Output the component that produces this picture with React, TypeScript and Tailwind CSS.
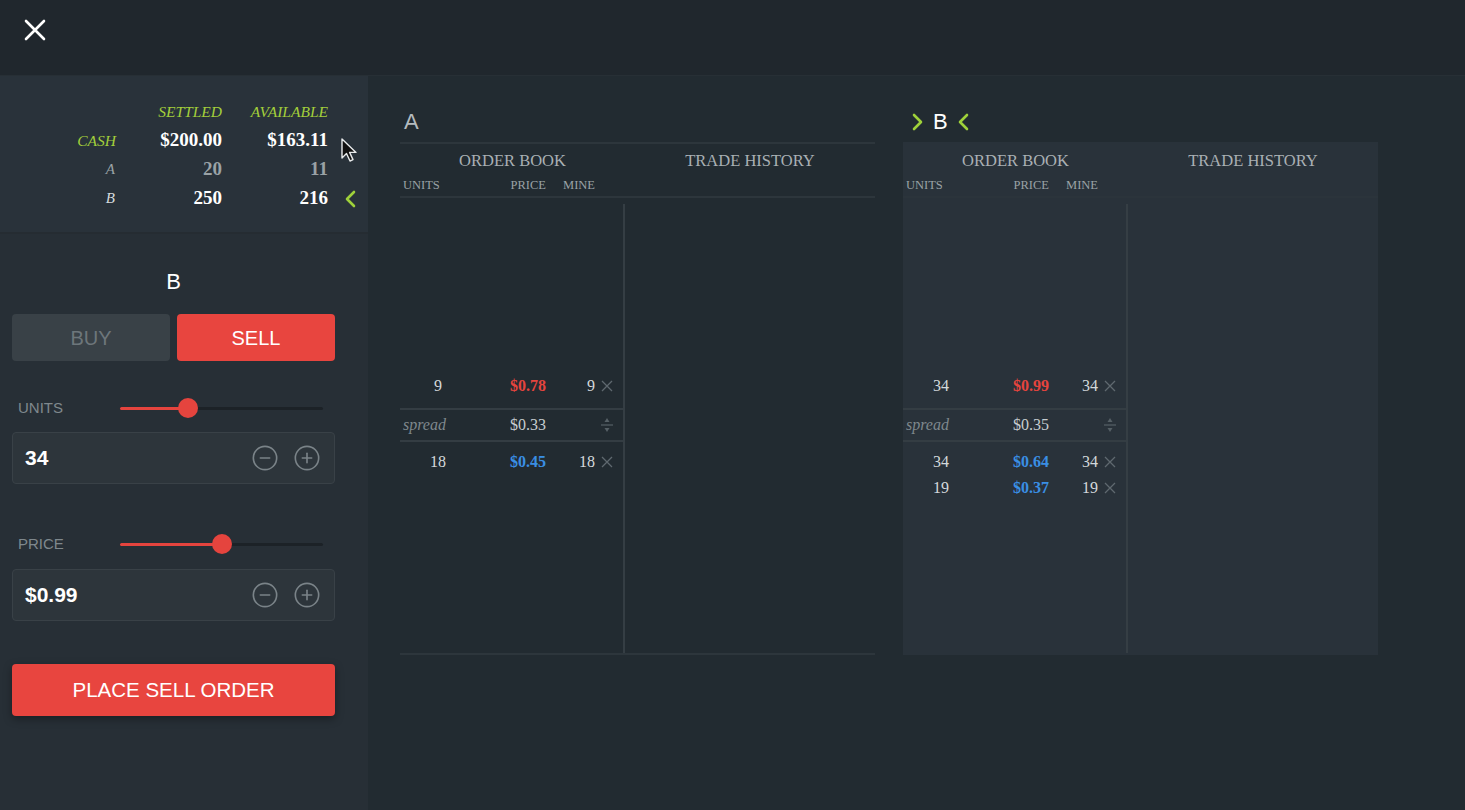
import { CircleMinus, CirclePlus } from 'lucide-react';

type Order = { units: number; price: string; mine: number };

interface Market {
  name: string;
  selected: boolean;
  asks: Order[];
  spread: string;
  bids: Order[];
}

const markets: Market[] = [
  { name: 'A', selected: false, asks: [{ units: 9, price: '$0.78', mine: 9 }], spread: '$0.33', bids: [{ units: 18, price: '$0.45', mine: 18 }] },
  {
    name: 'B',
    selected: true,
    asks: [{ units: 34, price: '$0.99', mine: 34 }],
    spread: '$0.35',
    bids: [
      { units: 34, price: '$0.64', mine: 34 },
      { units: 19, price: '$0.37', mine: 19 },
    ],
  },
];

const serif = { fontFamily: '"Liberation Serif", "Times New Roman", serif' };
const sans = { fontFamily: '"Liberation Sans", Arial, sans-serif' };

function Chevron({ dir }: { dir: 'left' | 'right' }) {
  return (
    <svg width="13" height="20" viewBox="0 0 13 20" fill="none">
      <polyline
        points={dir === 'left' ? '10,3 3,10 10,17' : '3,3 10,10 3,17'}
        stroke="#9fd13a"
        strokeWidth="2.6"
        strokeLinecap="round"
        strokeLinejoin="round"
      />
    </svg>
  );
}

function SmallX() {
  return (
    <svg width="12" height="12" viewBox="0 0 12 12">
      <path d="M1 1L11 11M11 1L1 11" stroke="#5f696f" strokeWidth="1.3" />
    </svg>
  );
}

function SpreadIcon() {
  return (
    <svg width="12" height="20" viewBox="0 0 12 20">
      <path d="M6 3L8.5 7H3.5Z" fill="#566066" />
      <path d="M0 10H12" stroke="#566066" strokeWidth="1.2" />
      <path d="M6 17L8.5 13H3.5Z" fill="#566066" />
    </svg>
  );
}

function OrderRow({ order, side }: { order: Order; side: 'ask' | 'bid' }) {
  return (
    <div className="grid grid-cols-[76px_70px_49px_24px] h-[26px] items-center text-[16px]" style={serif}>
      <span className="text-center text-[#d4d9dc]">{order.units}</span>
      <span className={`text-right font-bold ${side === 'ask' ? 'text-[#e5443e]' : 'text-[#3a8fe4]'}`}>{order.price}</span>
      <span className="text-right text-[#d4d9dc]">{order.mine}</span>
      <span className="flex justify-center">
        <SmallX />
      </span>
    </div>
  );
}

function MarketPanel({ market }: { market: Market }) {
  return (
    <div className="w-[475px] flex flex-col">
      {/* title */}
      <div className="h-[38px] flex items-center gap-[9px] pb-[3px]" style={sans}>
        {market.selected && <span className="ml-[8px]"><Chevron dir="right" /></span>}
        <span className={`text-[22px] ${market.selected ? 'text-white' : 'text-[#b4bbbf] ml-[4px]'}`}>{market.name}</span>
        {market.selected && <Chevron dir="left" />}
      </div>

      <div
        className={`h-[513px] flex flex-col border-t-2 border-b-2 ${
          market.selected ? 'bg-[#29323a] border-transparent' : 'border-[#2d363c]'
        }`}
      >
        {/* headers */}
        <div className="flex h-[30px] items-end text-[16.5px] text-[#a9b0b4]" style={serif}>
          <div className="w-[225px] text-center">ORDER BOOK</div>
          <div className="flex-1 text-center">TRADE HISTORY</div>
        </div>
        <div
          className={`grid grid-cols-[76px_70px_49px_24px] h-[24px] items-center text-[12.5px] text-[#9aa2a6] border-b-2 ${
            market.selected ? 'border-[#2b343b]' : 'border-[#2d363c]'
          }`}
          style={serif}
        >
          <span className="pl-[3px]">UNITS</span>
          <span className="text-right">PRICE</span>
          <span className="text-right">MINE</span>
          <span />
        </div>

        {/* body */}
        <div className="flex flex-1">
          <div className="w-[225px] flex flex-col border-r-2 border-[#353e44] mt-[6px]">
            <div className="h-[204px] flex flex-col justify-end pb-[9px]">
              {market.asks.map((o, i) => (
                <OrderRow key={i} order={o} side="ask" />
              ))}
            </div>
            <div
              className="grid grid-cols-[76px_70px_49px_24px] h-[34px] items-center border-t-2 border-b-2 border-[#343d43] text-[16px]"
              style={serif}
            >
              <span className="pl-[3px] italic text-[#7f888d]">spread</span>
              <span className="text-right text-[#c7cdd0]">{market.spread}</span>
              <span />
              <span className="flex justify-center">
                <SpreadIcon />
              </span>
            </div>
            <div className="pt-[7px]">
              {market.bids.map((o, i) => (
                <OrderRow key={i} order={o} side="bid" />
              ))}
            </div>
          </div>
          <div className="flex-1" />
        </div>
      </div>
    </div>
  );
}

function Slider({ label, pct }: { label: string; pct: number }) {
  return (
    <div className="flex items-center h-[30px]">
      <span className="w-[108px] pl-[6px] text-[15px] text-[#7f888d]" style={sans}>
        {label}
      </span>
      <div className="relative w-[203px] h-[3px] bg-[#1c2227] rounded-full">
        <div className="absolute left-0 top-0 h-[3px] bg-[#e5443e] rounded-full" style={{ width: `${pct}%` }} />
        <div
          className="absolute top-1/2 w-[20px] h-[20px] -mt-[10px] -ml-[10px] rounded-full bg-[#e5443e]"
          style={{ left: `${pct}%` }}
        />
      </div>
    </div>
  );
}

function Stepper({ value }: { value: string }) {
  return (
    <div className="h-[52px] flex items-center justify-between bg-[#2d353b] border border-[#394147] rounded-sm pl-[12px] pr-[13px]">
      <span className="text-[21px] font-bold text-white" style={sans}>
        {value}
      </span>
      <div className="flex items-center gap-[14px] text-[#7a8388]">
        <CircleMinus size={28} strokeWidth={1.4} />
        <CirclePlus size={28} strokeWidth={1.4} />
      </div>
    </div>
  );
}

export default function App() {
  return (
    <div className="w-[1465px] h-[810px] flex flex-col bg-[#222b31] overflow-hidden">
      {/* Top bar */}
      <header className="h-[76px] shrink-0 bg-[#20272d] border-b border-[#272f35] flex items-start pt-[19px] pl-[24px]">
        <svg width="22" height="22" viewBox="0 0 22 22">
          <path d="M2 2L20 20M20 2L2 20" stroke="white" strokeWidth="2.6" strokeLinecap="round" />
        </svg>
      </header>

      <div className="flex flex-1">
        {/* Left panel */}
        <aside className="w-[368px] shrink-0 bg-[#272f36] flex flex-col">
          {/* balances */}
          <div className="relative h-[158px] bg-[#29323a] border-b-2 border-[#252c32] pt-[21px]" style={serif}>
            <div className="grid grid-cols-[116px_106px_106px_30px] h-[29px] items-center italic text-[15.5px] text-[#a3cf3a] text-right">
              <span />
              <span>SETTLED</span>
              <span>AVAILABLE</span>
              <span />
            </div>
            <div className="grid grid-cols-[116px_106px_106px_30px] h-[29px] items-center text-right">
              <span className="italic text-[15.5px] text-[#a3cf3a]">CASH</span>
              <span className="font-bold text-[19px] text-white">$200.00</span>
              <span className="font-bold text-[19px] text-white">$163.11</span>
              <span />
            </div>
            <div className="grid grid-cols-[116px_106px_106px_30px] h-[29px] items-center text-right text-[#9aa2a6]">
              <span className="italic text-[15px] pr-[1px]">A</span>
              <span className="font-bold text-[19px]">20</span>
              <span className="font-bold text-[19px]">11</span>
              <span />
            </div>
            <div className="grid grid-cols-[116px_106px_106px_30px] h-[29px] items-center text-right">
              <span className="italic text-[15px] text-[#d6dbde] pr-[1px]">B</span>
              <span className="font-bold text-[19px] text-white">250</span>
              <span className="font-bold text-[19px] text-white">216</span>
              <span className="flex justify-end pr-[1px]">
                <Chevron dir="left" />
              </span>
            </div>
            {/* mouse pointer */}
            <svg className="absolute left-[341px] top-[62px]" width="18" height="26" viewBox="0 0 18 26">
              <path d="M1 1V20L5.5 15.5L9 23L12 21.6L8.6 14.4H15Z" fill="#111" stroke="#e8eaeb" strokeWidth="1.4" strokeLinejoin="round" />
            </svg>
          </div>

          {/* order form */}
          <div className="ml-[12px] w-[323px] flex flex-col pt-[32px]" style={sans}>
            <div className="h-[30px] flex items-center justify-center text-[22px] text-white">B</div>
            <div className="mt-[18px] flex gap-[7px] h-[47px]">
              <button className="flex-1 bg-[#394147] text-[#6d767b] text-[20px] rounded-sm">BUY</button>
              <button className="flex-1 bg-[#e8453f] text-white text-[20px] rounded-sm">SELL</button>
            </div>

            <div className="mt-[32px]">
              <Slider label="UNITS" pct={33.5} />
            </div>
            <div className="mt-[9px]">
              <Stepper value="34" />
            </div>

            <div className="mt-[45px]">
              <Slider label="PRICE" pct={50} />
            </div>
            <div className="mt-[10px]">
              <Stepper value="$0.99" />
            </div>

            <button className="mt-[43px] h-[52px] bg-[#e8453f] text-white text-[20.5px] rounded-[4px] shadow-[0_3px_8px_rgba(0,0,0,0.35)]">
              PLACE SELL ORDER
            </button>
          </div>
        </aside>

        {/* Markets */}
        <main className="flex-1 flex gap-[28px] pl-[32px] pt-[28px]">
          {markets.map(m => (
            <MarketPanel key={m.name} market={m} />
          ))}
        </main>
      </div>
    </div>
  );
}
